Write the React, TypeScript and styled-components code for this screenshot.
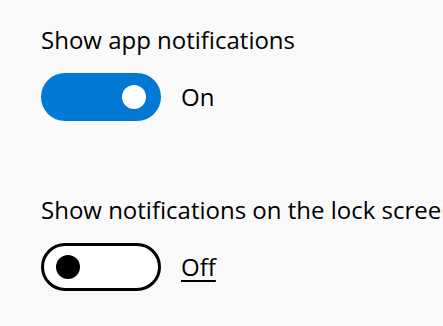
import React, { useState } from "react";
import styled, { createGlobalStyle } from "styled-components";

const Global = createGlobalStyle`
  html, body { margin: 0; padding: 0; background: #f9f9f9; }
  body { font-family: "Open Sans", "Noto Sans", sans-serif; color: #000; overflow: hidden; }
`;

const Page = styled.div`
  display: flex;
  flex-direction: column;
  padding: 24px 0 0 41px;
  gap: 73px;
  width: 443px;
  box-sizing: border-box;
  overflow: hidden;
`;

const Setting = styled.div`
  display: flex;
  flex-direction: column;
  gap: 17px;
`;

const Label = styled.div`
  font-size: 24px;
  line-height: 32px;
  white-space: nowrap;
`;

const Row = styled.div`
  display: flex;
  align-items: center;
  gap: 20px;
`;

const Track = styled.button<{ $on: boolean }>`
  width: 120px;
  height: 48px;
  margin: 0;
  border-radius: 24px;
  box-sizing: border-box;
  padding: 0 ${(p) => (p.$on ? 15 : 12)}px;
  display: flex;
  align-items: center;
  justify-content: ${(p) => (p.$on ? "flex-end" : "flex-start")};
  background: ${(p) => (p.$on ? "#0078d4" : "#ffffff")};
  border: ${(p) => (p.$on ? "none" : "3px solid #000")};
  cursor: pointer;
`;

const Knob = styled.span<{ $on: boolean }>`
  width: 24px;
  height: 24px;
  border-radius: 50%;
  background: ${(p) => (p.$on ? "#fff" : "#000")};
`;

const State = styled.span<{ $underline: boolean }>`
  font-size: 24px;
  line-height: 32px;
  text-decoration: ${(p) => (p.$underline ? "underline" : "none")};
  text-decoration-thickness: 2px;
  text-underline-offset: 4px;
`;

function Toggle({ label, initial }: { label: string; initial: boolean }) {
  const [on, setOn] = useState(initial);
  return (
    <Setting>
      <Label>{label}</Label>
      <Row>
        <Track $on={on} onClick={() => setOn(!on)} aria-pressed={on}>
          <Knob $on={on} />
        </Track>
        <State $underline={!on}>{on ? "On" : "Off"}</State>
      </Row>
    </Setting>
  );
}

export default function App() {
  return (
    <>
      <Global />
      <Page>
        <Toggle label="Show app notifications" initial={true} />
        <Toggle label="Show notifications on the lock screen" initial={false} />
      </Page>
    </>
  );
}
